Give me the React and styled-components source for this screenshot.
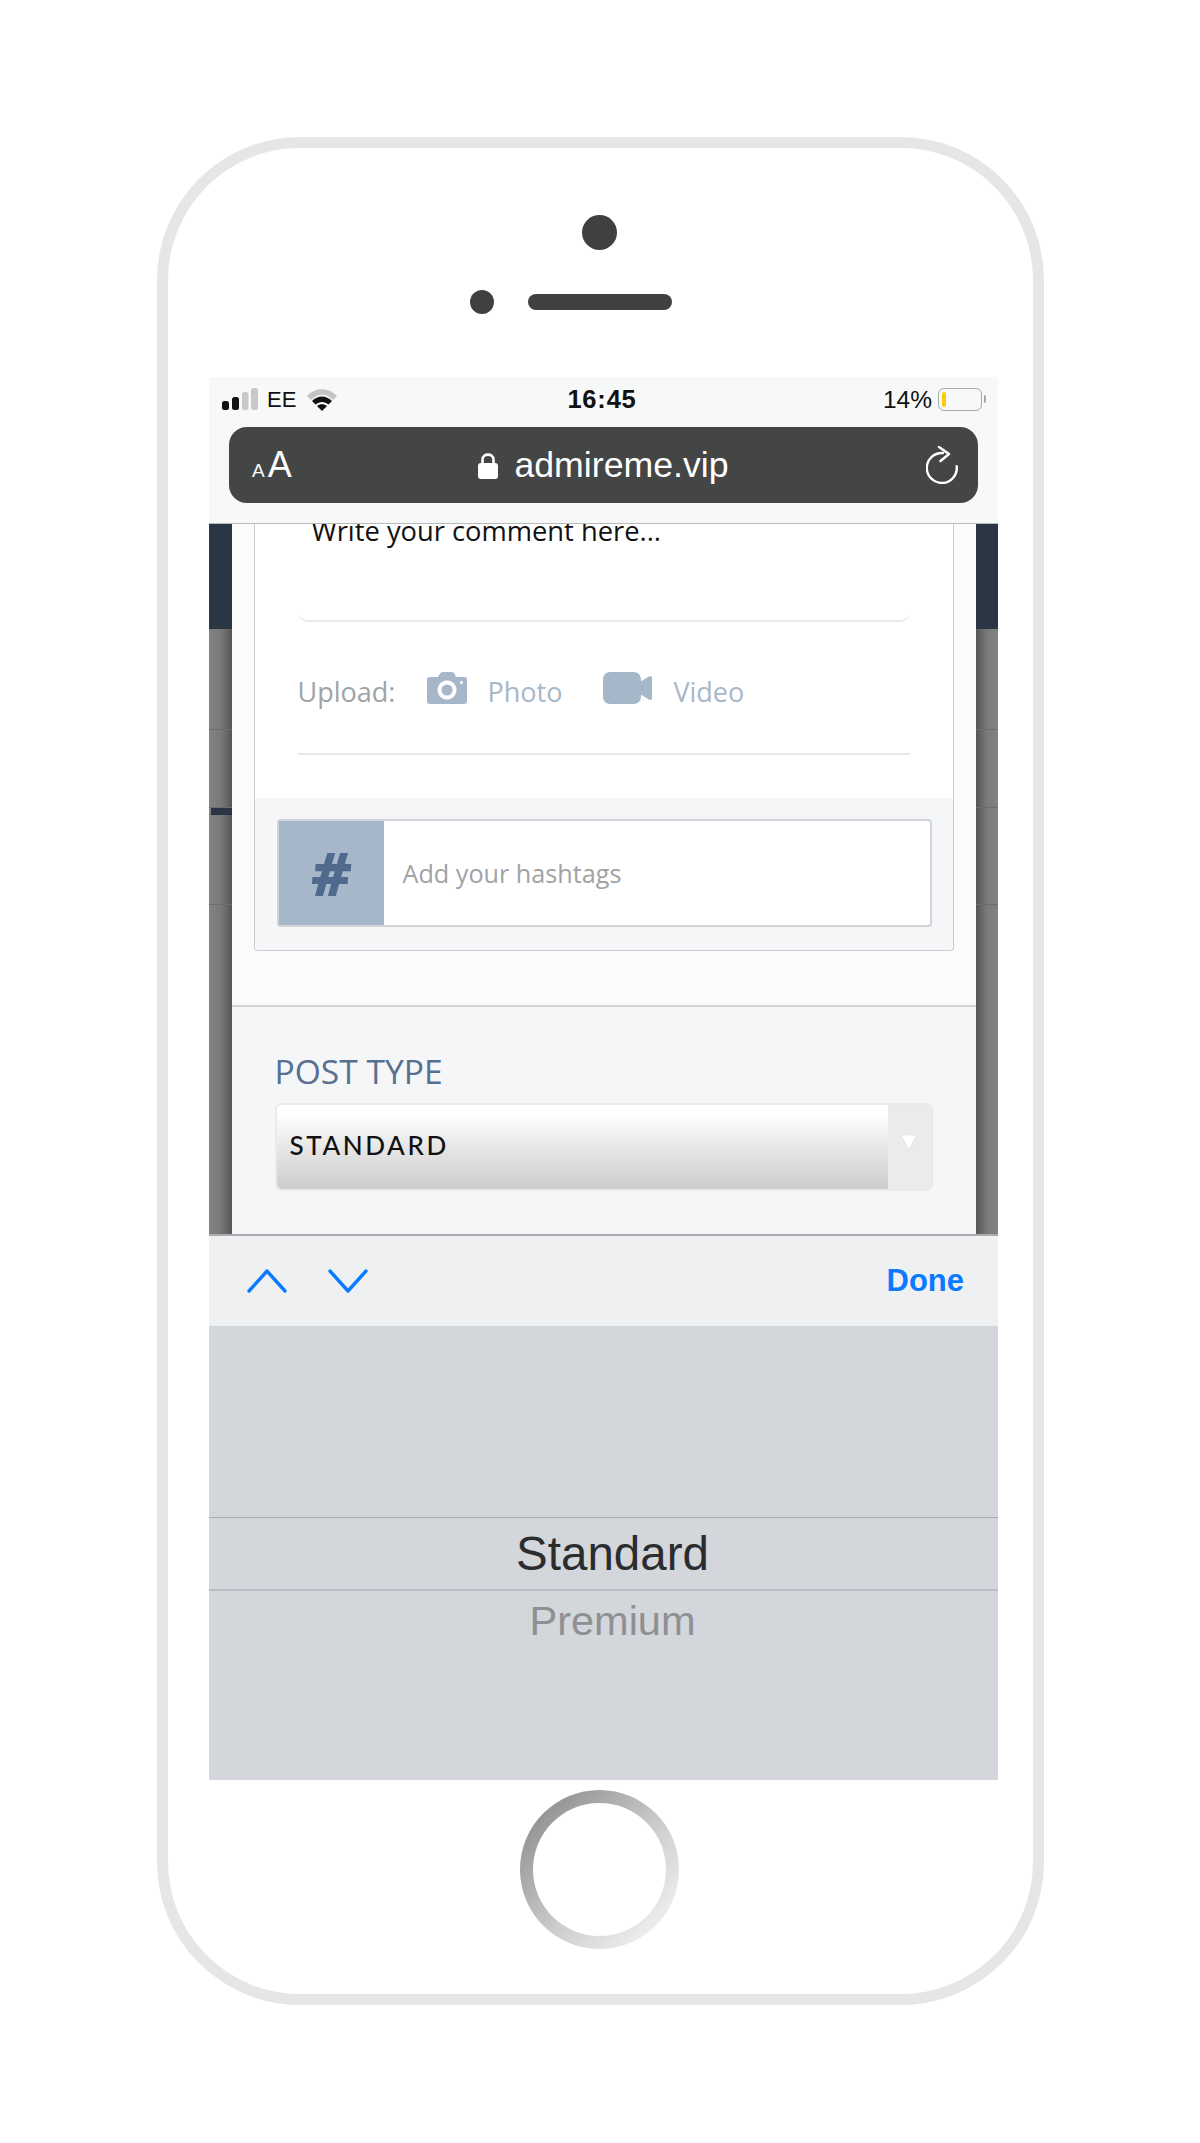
import React from "react";
import styled, { createGlobalStyle } from "styled-components";

const GlobalStyle = createGlobalStyle`
  html, body {
    margin: 0;
    padding: 0;
    background: #ffffff;
  }
  body {
    font-family: "Open Sans", sans-serif;
  }
`;

const Page = styled.div`
  width: 1200px;
  height: 2143px;
  padding: 137px 0 0 157px;
  box-sizing: border-box;
  overflow: hidden;
`;

const Phone = styled.div`
  width: 887px;
  height: 1868px;
  box-sizing: border-box;
  border: 11px solid #e6e6e6;
  border-radius: 143px;
  display: flex;
  flex-direction: column;
  align-items: center;
  background: #ffffff;
`;

const Camera = styled.div`
  width: 35px;
  height: 35px;
  margin-top: 67px;
  margin-right: 2px;
  border-radius: 50%;
  background: #3f403f;
`;

const SpeakerRow = styled.div`
  width: 100%;
  margin: 40px 1px 0 -1px;
  display: grid;
  grid-template-columns: 1fr 144px 1fr;
  align-items: center;
`;

const Sensor = styled.div`
  width: 24px;
  height: 24px;
  justify-self: end;
  margin-right: 34px;
  border-radius: 50%;
  background: #3f403f;
`;

const Speaker = styled.div`
  height: 16px;
  border-radius: 8px;
  background: #3f403f;
`;

const Screen = styled.div`
  width: 789px;
  height: 1403px;
  margin-top: 63px;
  margin-left: 6px;
  flex-shrink: 0;
  display: flex;
  flex-direction: column;
  overflow: hidden;
`;

const Browser = styled.div`
  height: 147px;
  flex-shrink: 0;
  box-sizing: border-box;
  background: #f7f8f8;
  border-bottom: 1px solid #b9bbbd;
`;

const StatusBar = styled.div`
  height: 50px;
  padding: 0 16px 5px 13px;
  box-sizing: border-box;
  display: grid;
  grid-template-columns: 1fr auto 1fr;
  align-items: center;
  font-family: "Liberation Sans", Arial, sans-serif;
  font-size: 22px;
  color: #111111;
`;

const StatusLeft = styled.div`
  display: flex;
  align-items: center;
`;

const Carrier = styled.span`
  margin-left: 9px;
  margin-right: 10px;
`;

const Clock = styled.span`
  font-weight: 700;
  font-size: 25.5px;
  letter-spacing: 0.8px;
`;

const StatusRight = styled.div`
  display: flex;
  align-items: center;
  justify-content: flex-end;
  font-size: 24.5px;
`;

const Battery = styled.div`
  width: 44px;
  height: 23px;
  margin-left: 6px;
  padding: 3px;
  box-sizing: border-box;
  border: 1.5px solid #a8a8a8;
  border-radius: 6px;
  position: relative;
  &::after {
    content: "";
    position: absolute;
    right: -5px;
    top: 6px;
    width: 2px;
    height: 8px;
    border-radius: 0 2px 2px 0;
    background: #a8a8a8;
  }
`;

const BatteryLevel = styled.div`
  width: 4px;
  height: 100%;
  border-radius: 2px;
  background: #fdcb0a;
`;

const UrlBar = styled.div`
  height: 76px;
  margin: 0 20px;
  padding: 0 18px;
  border-radius: 18px;
  background: #444545;
  display: grid;
  grid-template-columns: 1fr auto 1fr;
  align-items: center;
  font-family: "Liberation Sans", Arial, sans-serif;
  color: #ffffff;
`;

const TextSize = styled.div`
  padding-left: 5px;
  display: flex;
  align-items: baseline;
  line-height: 1;
`;

const SmallA = styled.span`
  font-size: 19px;
  margin-right: 3px;
`;

const BigA = styled.span`
  font-size: 36px;
`;

const Address = styled.div`
  display: flex;
  align-items: center;
  font-size: 35.7px;
  gap: 16px;
`;

const ReloadSlot = styled.div`
  display: flex;
  justify-content: flex-end;
`;

const Viewport = styled.div`
  height: 710px;
  flex-shrink: 0;
  display: flex;
  overflow: hidden;
`;

const Gutter = styled.div`
  flex: 1;
  display: flex;
  flex-direction: column;
  background: linear-gradient(
    ${(props) => (props.$right ? "to left" : "to right")},
    #828282 0%,
    #7a7a7a 50%,
    #565656 100%
  );
`;

const NavyStrip = styled.div`
  height: 105px;
  background: #2a3644;
`;

const GutterRow = styled.div`
  height: ${(props) => props.$height}px;
  box-sizing: border-box;
  border-bottom: 1px solid #6c6c6c;
`;

const GutterAccent = styled.div`
  height: 7px;
  margin-left: ${(props) => (props.$right ? "0" : "2px")};
  background: ${(props) => (props.$right ? "transparent" : "#2a3644")};
`;

const Modal = styled.div`
  width: 744px;
  flex-shrink: 0;
  background: #fbfbfb;
  display: flex;
  flex-direction: column;
`;

const Card = styled.div`
  width: 700px;
  margin-left: 22px;
  box-sizing: border-box;
  background: #ffffff;
  border: 1px solid #c9ccd0;
  border-top: none;
  border-radius: 0 0 4px 4px;
`;

const CommentBox = styled.div`
  height: 98px;
  margin: 0 43px;
  padding-left: 14px;
  box-sizing: border-box;
  border-bottom: 2px solid #e8e9ea;
  border-radius: 0 0 10px 10px;
  overflow: hidden;
`;

const CommentText = styled.div`
  margin-top: -10px;
  font-size: 27.3px;
  line-height: 34px;
  color: #111111;
`;

const UploadRow = styled.div`
  height: 133px;
  margin: 0 43px;
  padding-top: 1px;
  box-sizing: border-box;
  border-bottom: 2px solid #e8e9ea;
  display: flex;
  align-items: center;
  font-size: 27px;
  color: #a0a3a6;
`;

const UploadLabel = styled.span`
  width: 129px;
  margin-top: 7px;
`;

const UploadLink = styled.span`
  margin-top: 7px;
  margin-left: ${(props) => props.$gap}px;
  margin-right: ${(props) => props.$after}px;
  color: #a6b7ca;
`;

const HashtagSection = styled.div`
  margin-top: 43px;
  padding: 21px 21px 23px 22px;
  background: #f5f6f8;
  border-radius: 0 0 4px 4px;
`;

const HashtagInput = styled.div`
  height: 108px;
  box-sizing: border-box;
  border: 2px solid #d0d3d8;
  border-radius: 4px;
  background: #ffffff;
  display: flex;
  align-items: center;
`;

const HashBox = styled.div`
  width: 105px;
  height: 100%;
  background: #a6b7ca;
  display: flex;
  align-items: center;
  justify-content: center;
  font-family: "Open Sans", sans-serif;
  font-weight: 800;
  font-style: italic;
  font-size: 60px;
  line-height: 1;
  color: #4f6a8c;
`;

const Placeholder = styled.span`
  margin-left: 19px;
  font-size: 25.2px;
  color: #a0a2a5;
`;

const PostSection = styled.div`
  flex: 1;
  margin-top: 54px;
  padding: 42px 0 0 43px;
  background: #f5f6f8;
  border-top: 2px solid #d3d5d8;
`;

const PostLabel = styled.div`
  font-size: 33.6px;
  line-height: 45px;
  color: #56708f;
`;

const SelectBox = styled.div`
  width: 658px;
  height: 88px;
  margin-top: 9px;
  box-sizing: border-box;
  border: 2px solid #e9eaeb;
  border-radius: 7px;
  overflow: hidden;
  display: flex;
`;

const SelectValue = styled.div`
  flex: 1;
  padding: 0 0 4px 13px;
  display: flex;
  align-items: center;
  background: linear-gradient(to bottom, #ffffff 10%, #e4e4e4 55%, #cdcdcd 100%);
  font-family: "Lato", sans-serif;
  font-weight: 500;
  font-size: 26px;
  letter-spacing: 2.6px;
  color: #111111;
`;

const SelectArrow = styled.div`
  width: 43px;
  padding-top: 30px;
  box-sizing: border-box;
  display: flex;
  justify-content: center;
  background: #ebebeb;
`;

const KeyboardBar = styled.div`
  height: 92px;
  flex-shrink: 0;
  box-sizing: border-box;
  padding: 0 34px 0 38px;
  border-top: 2px solid #a9abae;
  background: #eff0f2;
  display: flex;
  align-items: center;
  gap: 41px;
`;

const Done = styled.span`
  margin-left: auto;
  font-family: "Liberation Sans", Arial, sans-serif;
  font-weight: 700;
  font-size: 31px;
  color: #0a7aff;
`;

const Picker = styled.div`
  flex: 1;
  padding: 191px 0 0 18px;
  background: #d3d6db;
  font-family: "Liberation Sans", Arial, sans-serif;
  text-align: center;
`;

const PickerSelected = styled.div`
  height: 74px;
  margin-left: -18px;
  padding-left: 18px;
  box-sizing: border-box;
  border-top: 1px solid #a9acb2;
  border-bottom: 2px solid #b9bcc2;
  font-size: 47.5px;
  line-height: 72px;
  color: #2b2c2e;
`;

const PickerOption = styled.div`
  font-size: 41.5px;
  line-height: 60px;
  color: #8e9093;
`;

const HomeButton = styled.div`
  width: 159px;
  height: 159px;
  margin-top: 10px;
  margin-left: -2px;
  padding: 13px;
  box-sizing: border-box;
  border-radius: 50%;
  background: linear-gradient(135deg, #8f8f8f 10%, #cdcdcd 55%, #f2f2f2 90%);
`;

const HomeFace = styled.div`
  width: 100%;
  height: 100%;
  border-radius: 50%;
  background: #ffffff;
`;

const Signal = () => (
  <svg width="36" height="23" viewBox="0 0 36 23">
    <rect x="0" y="13" width="7" height="9" rx="2.5" fill="#111" />
    <rect x="10" y="9" width="7" height="13" rx="2.5" fill="#111" />
    <rect x="20" y="4" width="6.5" height="18" rx="2.5" fill="#c8c8c8" />
    <rect x="29" y="0" width="7" height="22" rx="2.5" fill="#c8c8c8" />
  </svg>
);

const Wifi = () => (
  <svg width="32" height="24" viewBox="0 0 32 24">
    <path d="M1 8 C9 -1 23 -1 31 8 L27 12 C20 5 12 5 5 12 Z" fill="#c4c4c4" />
    <path d="M6 13 C12 7 20 7 26 13 L22.5 16.5 C18.5 13 13.5 13 9.5 16.5 Z" fill="#111" />
    <path d="M11 18 C14 15.5 18 15.5 21 18 L16 23 Z" fill="#111" />
  </svg>
);

const Lock = () => (
  <svg width="20" height="27" viewBox="0 0 20 27">
    <path d="M4.5 12 V7.5 C4.5 1 15.5 1 15.5 7.5 V12" fill="none" stroke="#fff" strokeWidth="2.6" />
    <rect x="0" y="11" width="20" height="16" rx="3" fill="#fff" />
  </svg>
);

const Reload = () => (
  <svg width="34" height="38" viewBox="0 0 34 38" fill="none" stroke="#fff" strokeWidth="2.4" strokeLinecap="round" strokeLinejoin="round">
    <path d="M17 7 A15 15 0 1 0 30.7 20.3" />
    <path d="M13 1 L23 8 L14.5 15" />
  </svg>
);

const CameraIcon = () => (
  <svg width="40" height="32" viewBox="0 0 40 32">
    <path
      fillRule="evenodd"
      fill="#a6b7ca"
      d="M3 5 H11 L13 1.5 Q13.8 0 15.5 0 H25 Q26.7 0 27.5 1.5 L29 5 H37 Q40 5 40 8 V29 Q40 32 37 32 H3 Q0 32 0 29 V8 Q0 5 3 5 Z M20 8.5 A9.5 9.5 0 1 0 20.01 8.5 Z M34.5 9 A1.5 1.5 0 1 0 34.51 9 Z"
    />
    <circle cx="20" cy="18" r="5.6" fill="#a6b7ca" />
  </svg>
);

const VideoIcon = () => (
  <svg width="49" height="32" viewBox="0 0 49 32">
    <rect x="0" y="0" width="38" height="32" rx="7" fill="#a6b7ca" />
    <path d="M36 10.5 L46 4.5 Q49 3 49 6 V26 Q49 29 46 27.5 L36 21.5 Z" fill="#a6b7ca" />
  </svg>
);

const Chevron = ({ up }) => (
  <svg width="40" height="24" viewBox="0 0 40 24" fill="none" stroke="#0a7aff" strokeWidth="3.4" strokeLinecap="round" strokeLinejoin="round">
    <polyline points={up ? "2,22 20,2 38,22" : "2,2 20,22 38,2"} />
  </svg>
);

const App = () => {
  return (
    <>
      <GlobalStyle />
      <Page>
        <Phone>
          <Camera />
          <SpeakerRow>
            <Sensor />
            <Speaker />
          </SpeakerRow>
          <Screen>
            <Browser>
              <StatusBar>
                <StatusLeft>
                  <Signal />
                  <Carrier>EE</Carrier>
                  <Wifi />
                </StatusLeft>
                <Clock>16:45</Clock>
                <StatusRight>
                  14%
                  <Battery>
                    <BatteryLevel />
                  </Battery>
                </StatusRight>
              </StatusBar>
              <UrlBar>
                <TextSize>
                  <SmallA>A</SmallA>
                  <BigA>A</BigA>
                </TextSize>
                <Address>
                  <Lock />
                  admireme.vip
                </Address>
                <ReloadSlot>
                  <Reload />
                </ReloadSlot>
              </UrlBar>
            </Browser>
            <Viewport>
              <Gutter>
                <NavyStrip />
                <GutterRow $height={101} />
                <GutterRow $height={78} />
                <GutterAccent />
                <GutterRow $height={90} />
              </Gutter>
              <Modal>
                <Card>
                  <CommentBox>
                    <CommentText>Write your comment here...</CommentText>
                  </CommentBox>
                  <UploadRow>
                    <UploadLabel>Upload:</UploadLabel>
                    <CameraIcon />
                    <UploadLink $gap={21} $after={41}>Photo</UploadLink>
                    <VideoIcon />
                    <UploadLink $gap={21} $after={0}>Video</UploadLink>
                  </UploadRow>
                  <HashtagSection>
                    <HashtagInput>
                      <HashBox>#</HashBox>
                      <Placeholder>Add your hashtags</Placeholder>
                    </HashtagInput>
                  </HashtagSection>
                </Card>
                <PostSection>
                  <PostLabel>POST TYPE</PostLabel>
                  <SelectBox>
                    <SelectValue>STANDARD</SelectValue>
                    <SelectArrow>
                      <svg width="16" height="15" viewBox="0 0 16 15">
                        <path d="M0 0 H16 L8 15 Z" fill="#ffffff" stroke="#d8d8d8" strokeWidth="0.6" />
                      </svg>
                    </SelectArrow>
                  </SelectBox>
                </PostSection>
              </Modal>
              <Gutter $right>
                <NavyStrip />
                <GutterRow $height={101} />
                <GutterRow $height={78} />
                <GutterAccent $right />
                <GutterRow $height={90} />
              </Gutter>
            </Viewport>
            <KeyboardBar>
              <Chevron up />
              <Chevron />
              <Done>Done</Done>
            </KeyboardBar>
            <Picker>
              <PickerSelected>Standard</PickerSelected>
              <PickerOption>Premium</PickerOption>
            </Picker>
          </Screen>
          <HomeButton>
            <HomeFace />
          </HomeButton>
        </Phone>
      </Page>
    </>
  );
};

export default App;
